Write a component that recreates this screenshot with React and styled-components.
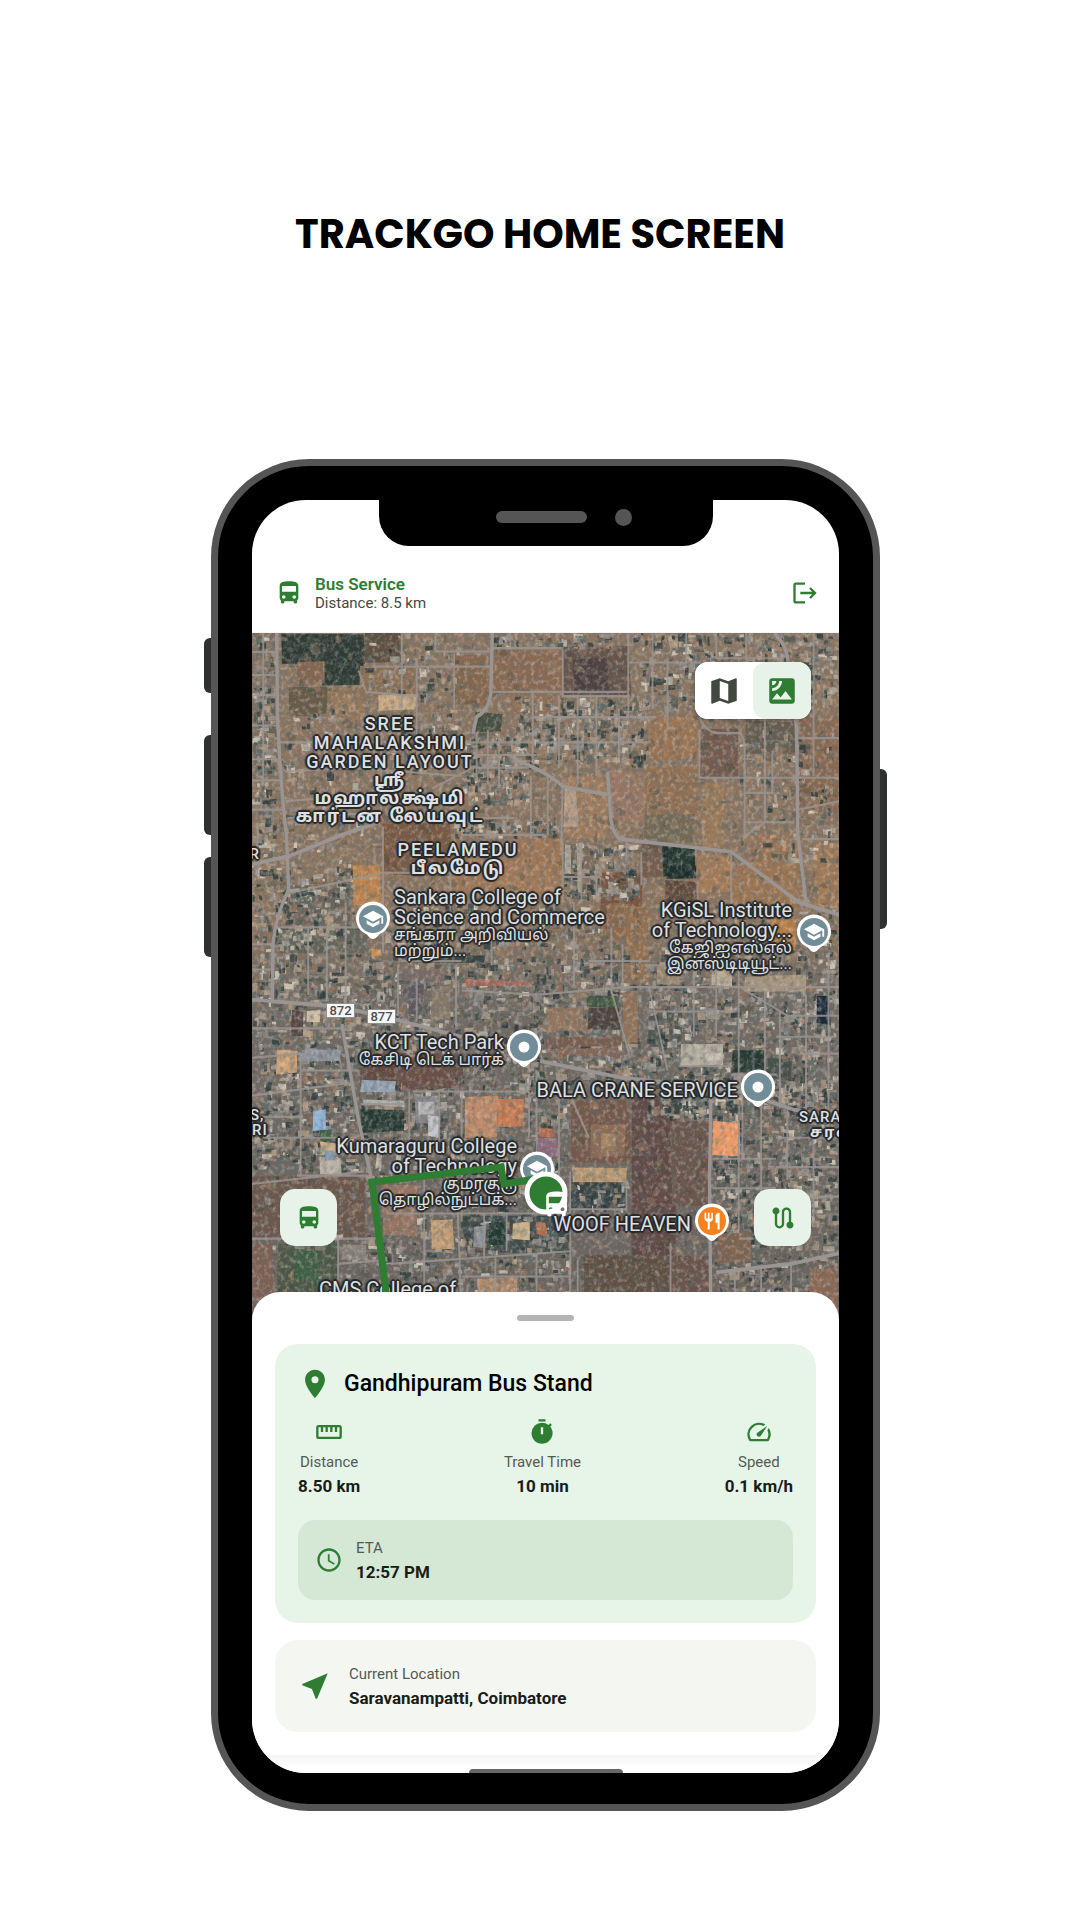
import React from "react";
import styled, { createGlobalStyle, css } from "styled-components";
import {
  MdDirectionsBus,
  MdLogout,
  MdMap,
  MdSatellite,
  MdLocationOn,
  MdStraighten,
  MdTimer,
  MdSpeed,
  MdAccessTime,
  MdNearMe,
  MdRoute,
} from "react-icons/md";

const GlobalStyle = createGlobalStyle`
  *, *::before, *::after { box-sizing: border-box; }
  body {
    margin: 0;
    background: #ffffff;
    font-family: Roboto, "Noto Sans", "Noto Sans Tamil", sans-serif;
  }
  button { font: inherit; border: 0; padding: 0; margin: 0; cursor: pointer; }
  svg { display: block; flex: none; }
`;

const green = "#2e7d32";

/* ---------- page and device ---------- */

const Page = styled.main`
  min-height: 100vh;
  display: flex;
  flex-direction: column;
  align-items: center;
  padding: 210px 0 109px;
`;

const Title = styled.h1`
  margin: 0 0 201px;
  font-family: Poppins, Inter, sans-serif;
  font-size: 40px;
  line-height: 48px;
  font-weight: 700;
  color: #000;
  text-align: center;
`;

const Device = styled.div`
  display: flex;
  align-items: flex-start;
  width: 100%;
  max-width: 694px;
  padding-left: 11px;
`;

const Keys = styled.div`
  display: flex;
  flex-direction: column;
  width: 7px;
  padding-top: ${(p) => p.$top}px;
`;

const Key = styled.span`
  height: ${(p) => p.$length}px;
  margin-bottom: ${(p) => p.$gap || 0}px;
  background: #2f3131;
  border-radius: ${(p) => (p.$side === "left" ? "6px 0 0 6px" : "0 6px 6px 0")};
`;

const Body = styled.div`
  flex: 1;
  min-width: 0;
  background: #000;
  border: 7px solid #555;
  border-radius: 98px;
  padding: 34px 34px 31px;
`;

const Screen = styled.div`
  position: relative;
  overflow: hidden;
  display: flex;
  flex-direction: column;
  background: #fff;
  border-radius: 54px;
`;

const Notch = styled.div`
  position: absolute;
  top: 0;
  left: 50%;
  width: 334px;
  height: 46px;
  margin-left: -167px;
  display: flex;
  align-items: center;
  justify-content: flex-end;
  gap: 28px;
  padding: 0 81px 12px 0;
  background: #000;
  border-radius: 0 0 30px 30px;
`;

const Speaker = styled.span`
  width: 91px;
  height: 12px;
  border-radius: 6px;
  background: #555;
`;

const Camera = styled.span`
  width: 17px;
  height: 17px;
  border-radius: 50%;
  background: #555;
`;

/* ---------- header ---------- */

const Header = styled.header`
  display: flex;
  align-items: center;
  gap: 12px;
  padding: 72px 20px 18px 23px;
  height: 133px;
  border-bottom: 1px solid #f4f4f4;
  color: ${green};
`;

const HeaderText = styled.div`
  flex: 1;
`;

const Service = styled.h2`
  margin: 0;
  font-size: 17px;
  line-height: 20px;
  font-weight: 600;
`;

const ServiceMeta = styled.p`
  margin: 0;
  font-size: 15px;
  line-height: 18px;
  color: #424940;
`;

const IconButton = styled.button`
  display: grid;
  place-items: center;
  background: none;
  color: ${green};
`;

/* ---------- map ---------- */

const MapArea = styled.section`
  position: relative;
  height: 694px;
  overflow: hidden;
  background: #85705e;
`;

const TerrainSvg = styled.svg`
  width: 100%;
  height: 100%;
`;

const Overlay = styled.svg`
  position: absolute;
  left: 0;
  top: 0;
  width: 587px;
  height: 694px;
`;

const outline = css`
  text-shadow: -1px -1px 1px #26282b, 1px -1px 1px #26282b, -1px 1px 1px #26282b,
    1px 1px 1px #26282b, 0 2px 1px #26282b, 0 -2px 1px #26282b,
    2px 0 1px #26282b, -2px 0 1px #26282b, 0 0 3px #26282b;
`;

const MapLabel = styled.div`
  position: absolute;
  top: ${(p) => p.$y}px;
  left: ${(p) => p.$x}px;
  display: flex;
  flex-direction: column;
  align-items: ${(p) =>
    ({ start: "flex-start", middle: "center", end: "flex-end" })[p.$anchor]};
  transform: translateX(
    ${(p) => ({ start: "0", middle: "-50%", end: "-100%" })[p.$anchor]}
  );
  white-space: nowrap;
  color: #dfe0e1;
  ${outline}
`;

const PlaceName = styled.span`
  font-size: 20px;
  line-height: 20px;
`;

const PlaceNative = styled.span`
  font-size: 16px;
  line-height: 16px;
`;

const AreaName = styled.span`
  font-size: ${(p) => (p.$small ? 15 : 18)}px;
  line-height: ${(p) => (p.$small ? 15 : 19)}px;
  font-weight: 500;
  letter-spacing: ${(p) => (p.$small ? 1 : 2)}px;
`;

const AreaNative = styled.span`
  font-size: ${(p) => (p.$small ? 15 : 18)}px;
  line-height: ${(p) => (p.$small ? 15 : 18)}px;
  font-weight: 700;
  letter-spacing: 2px;
`;

const RoadShield = styled.span`
  position: absolute;
  top: ${(p) => p.$y}px;
  left: ${(p) => p.$x}px;
  width: 29px;
  height: 15px;
  background: #f6f6f6;
  border: 1px solid #8b8f93;
  color: #4a4d51;
  font-size: 13px;
  line-height: 13px;
  font-weight: 500;
  text-align: center;
`;

const MapToggle = styled.div`
  position: absolute;
  top: 29px;
  right: 28px;
  display: flex;
  background: #fff;
  border-radius: 13px;
  box-shadow: 0 1px 5px rgba(0, 0, 0, 0.35);
`;

const ToggleButton = styled.button`
  display: grid;
  place-items: center;
  width: 58px;
  height: 57px;
  border-radius: 13px;
  background: ${(p) => (p.$active ? "#e7f3e8" : "#ffffff")};
  color: ${(p) => (p.$active ? green : "#424940")};
`;

const MapButton = styled.button`
  position: absolute;
  top: 556px;
  ${(p) => p.$side}: 28px;
  display: grid;
  place-items: center;
  width: 57px;
  height: 57px;
  border-radius: 15px;
  background: #e7f3e8;
  color: ${green};
`;

/* ---------- bottom sheet ---------- */

const Sheet = styled.section`
  position: relative;
  display: flex;
  flex-direction: column;
  margin-top: -35px;
  padding: 23px 23px;
  background: #fff;
  border-radius: 28px 28px 0 0;
`;

const Handle = styled.span`
  align-self: center;
  width: 57px;
  height: 6px;
  border-radius: 3px;
  background: #b3b5b2;
  margin-bottom: 23px;
`;

const Card = styled.article`
  display: flex;
  flex-direction: ${(p) => (p.$row ? "row" : "column")};
  align-items: ${(p) => (p.$row ? "center" : "stretch")};
  gap: ${(p) => (p.$row ? 17 : 0)}px;
  padding: ${(p) => (p.$row ? "22px 23px" : "22px 23px 23px")};
  margin-bottom: ${(p) => (p.$row ? 0 : 17)}px;
  border-radius: 23px;
  background: ${(p) => (p.$row ? "#f4f6f1" : "#e7f4e8")};
  color: ${green};
`;

const StopRow = styled.div`
  display: flex;
  align-items: center;
  gap: 12px;
  margin-bottom: 17px;
`;

const StopName = styled.h3`
  margin: 0;
  font-size: 23px;
  line-height: 35px;
  font-weight: 500;
  color: #000;
`;

const Stats = styled.div`
  display: flex;
  justify-content: space-between;
  margin-bottom: 22px;
`;

const Stat = styled.div`
  display: flex;
  flex-direction: column;
  align-items: center;
  gap: 4px;
`;

const Field = styled.dl`
  margin: 0;
  text-align: ${(p) => (p.$centered ? "center" : "left")};
`;

const FieldLabel = styled.dt`
  font-size: 15px;
  line-height: 24px;
  color: #535b51;
`;

const FieldValue = styled.dd`
  margin: 0;
  font-size: 17px;
  line-height: 24px;
  font-weight: 700;
  color: #191d18;
`;

const EtaBox = styled.div`
  display: flex;
  align-items: center;
  gap: 13px;
  padding: 16px 17px;
  border-radius: 17px;
  background: #d5e8d5;
`;

const NavStrip = styled.div`
  display: flex;
  justify-content: center;
  align-items: flex-end;
  height: 18px;
  background: linear-gradient(#f5f5f5, #fefefe 70%);
`;

const NavBar = styled.span`
  width: 154px;
  height: 4px;
  border-radius: 4px 4px 0 0;
  background: #636664;
`;

/* ---------- satellite ground ---------- */

function makeRandom(seed) {
  let s = seed;
  return () => {
    s = (s * 1664525 + 1013904223) % 4294967296;
    return s / 4294967296;
  };
}

const FIELDS = [
  [80, 0, 220, 75, "#2e3a36"], [190, 60, 110, 62, "#2f3b35"], [120, 70, 70, 50, "#86664f"],
  [0, 0, 66, 350, "#7f6f5e"], [100, 130, 100, 70, "#675a45"], [200, 130, 100, 80, "#94765a"],
  [300, 0, 100, 70, "#5d5040"], [290, 80, 150, 70, "#8d6f57"],
  [540, 50, 90, 120, "#86684f"], [645, 40, 200, 110, "#8b6a53"],
  [830, 30, 180, 120, "#66524a"], [860, 60, 90, 80, "#4f4040"], [690, 140, 140, 50, "#8f7056"],
  [1060, 200, 130, 100, "#9c7454"], [1200, 230, 100, 110, "#745a4e"], [1320, 210, 130, 80, "#665d50"],
  [1460, 200, 108, 230, "#8a6a52"], [830, 340, 120, 150, "#a07c5e"], [835, 370, 34, 90, "#b59a83"],
  [960, 330, 90, 120, "#987763"], [1050, 320, 140, 120, "#917052"], [1050, 430, 130, 70, "#746a55"],
  [1200, 360, 60, 150, "#9a7a58"], [1330, 480, 130, 130, "#9b7353"], [350, 455, 180, 120, "#7a5943"],
  [530, 540, 300, 80, "#a27958"], [700, 490, 130, 70, "#9f7654"],
  [830, 500, 90, 60, "#7b6a59"], [930, 570, 110, 130, "#7a543f"], [1040, 500, 60, 80, "#765b4c"],
  [1102, 590, 90, 60, "#5f4637"], [1190, 530, 90, 90, "#a67c59"],
  [1280, 560, 180, 100, "#9c7453"], [1500, 500, 68, 150, "#a07855"], [1000, 650, 62, 180, "#95704f"],
  [950, 640, 50, 90, "#8b694d"], [100, 600, 160, 90, "#6a6458"],
  [70, 700, 240, 60, "#66655a"], [1060, 900, 90, 80, "#505750"],
  [290, 1000, 270, 80, "#665047"], [850, 1110, 160, 150, "#745849"],
  [1010, 1100, 120, 470, "#604a45"], [1120, 1160, 100, 200, "#6b544c"],
  [0, 1290, 300, 150, "#6b574c"], [890, 1480, 230, 170, "#5f4f43"], [1120, 1480, 100, 170, "#6b534b"],
  [560, 1385, 290, 90, "#414b49"], [70, 1450, 160, 120, "#4b5644"], [850, 1306, 150, 62, "#364245"],
];

const LANDMARKS = [
  [340, 150, 98, 32, "#c9a983"], [600, 190, 66, 44, "#465041"], [272, 552, 72, 92, "#bd8350"],
  [1098, 505, 85, 75, "#24342f"], [1110, 550, 76, 32, "#1f2e2a"], [1382, 682, 70, 76, "#bd8047"],
  [420, 764, 200, 20, "#36433e"], [395, 802, 116, 22, "#7a6a66"], [570, 826, 180, 14, "#a8695c"],
  [416, 840, 40, 66, "#5d575e"], [480, 842, 50, 80, "#857868"], [785, 892, 100, 52, "#93765f"],
  [898, 892, 84, 52, "#4c433e"], [892, 866, 86, 24, "#41543d"], [784, 962, 200, 22, "#7a5c4e"],
  [790, 990, 190, 14, "#84685a"], [990, 852, 40, 120, "#937259"], [1148, 980, 108, 48, "#b3ad9e"],
  [1282, 996, 92, 46, "#263833"], [1506, 866, 36, 64, "#1f2c38"], [300, 1016, 86, 52, "#64493f"],
  [400, 1020, 130, 66, "#6b4d45"], [66, 992, 58, 56, "#d0a377"], [134, 990, 104, 30, "#8e949c"],
  [292, 1064, 90, 26, "#93a3b5"], [292, 1134, 114, 54, "#263831"], [296, 1112, 110, 12, "#aeb2ad"],
  [566, 1104, 92, 92, "#bf8a68"], [658, 1106, 68, 66, "#c97c51"], [436, 1102, 62, 62, "#87868a"],
  [446, 1112, 40, 34, "#b4b4b4"], [470, 1148, 32, 50, "#c3c6c8"], [165, 1135, 30, 46, "#8fb5de"],
  [182, 1180, 30, 28, "#3f5f45"], [184, 1212, 52, 30, "#c9ad86"], [182, 1246, 56, 40, "#b7b1a3"],
  [196, 1232, 24, 24, "#8298ad"], [904, 1172, 92, 72, "#8d6c56"], [930, 1190, 44, 44, "#a58261"],
  [1232, 1162, 70, 80, "#ee9a66"], [856, 1274, 146, 28, "#b8986f"], [350, 1312, 92, 120, "#957361"],
  [480, 1394, 58, 72, "#c49d74"], [697, 1402, 48, 38, "#cbb28a"], [759, 1402, 28, 30, "#b5714e"],
  [632, 1400, 48, 58, "#203730"], [762, 1202, 56, 40, "#8d6a7c"], [766, 1180, 46, 20, "#b86c50"],
  [110, 1470, 70, 70, "#3c5d43"], [2, 1450, 56, 200, "#7d6153"], [604, 1532, 104, 60, "#b48b69"],
  [1244, 1426, 90, 70, "#80634f"], [1490, 1510, 78, 140, "#8b6753"], [1080, 790, 60, 44, "#9b8871"],
  [1226, 800, 54, 40, "#b9aa94"], [1316, 816, 164, 36, "#a9967f"], [836, 500, 14, 74, "#a9a495"],
  [868, 500, 14, 120, "#aaa08b"], [590, 1408, 36, 50, "#8c9195"], [240, 1456, 66, 34, "#8d857d"],
  [146, 896, 34, 26, "#cfbfa4"], [108, 900, 28, 60, "#574440"],
  [1200, 1000, 50, 20, "#c5c0b2"], [320, 750, 26, 22, "#c78d51"], [1380, 1010, 60, 50, "#46504a"],
];

const DISTRICTS = [
  [0, 0, 66, 540, 190], [80, 170, 220, 360, 110], [300, 0, 260, 170, 60], [640, 0, 430, 40, 60],
  [1030, 0, 538, 190, 420], [560, 235, 190, 180, 200], [700, 150, 360, 170, 340],
  [540, 440, 290, 50, 110], [830, 500, 210, 140, 170], [1300, 230, 260, 320, 150],
  [0, 540, 280, 220, 260], [0, 760, 560, 250, 560], [560, 760, 480, 240, 400],
  [360, 180, 200, 160, 90], [560, 1000, 540, 100, 240], [1050, 740, 518, 420, 900],
  [0, 1000, 290, 290, 420], [290, 1050, 280, 260, 280], [560, 1100, 290, 290, 240],
  [1090, 1100, 130, 60, 60], [1230, 1050, 338, 420, 560], [300, 1380, 560, 270, 420],
  [1230, 1480, 338, 170, 200], [0, 1290, 340, 360, 50], [350, 640, 600, 120, 170],
  [1190, 640, 378, 120, 90], [860, 1300, 150, 80, 40],
];

const ROOFS = ["#b3aba0", "#d6cdbd", "#87807a", "#565850", "#35423e", "#92725e", "#5d6a66", "#b09a82", "#97918c", "#2c3a3b"];

const ROADS_MAIN = [
  "M66 0 L68 200 Q78 380 92 480 L98 610 Q60 680 56 740 L54 880",
  "M642 0 L638 140 Q636 180 600 200 L590 240",
  "M950 330 L958 440 Q966 482 985 490 L1280 520 L1460 640 L1568 670",
  "M1395 0 Q1430 30 1432 70 L1455 230 L1458 480 L1480 640",
  "M0 872 L230 888 L380 918 L560 960",
  "M240 930 L285 1160 L320 1300 L345 1460 L365 1640",
  "M770 1018 L980 1056 L1300 1090 L1450 1134 L1568 1150",
  "M1226 1090 L1222 1300 L1226 1640",
  "M0 550 L100 530 L240 480 L340 450",
  "M700 300 Q790 330 830 365 L950 384",
  "M1240 1520 L1440 1500 L1568 1475",
];

const ROADS_MINOR = [
  "M0 45 H66 M0 100 H66 M0 148 H66 M0 220 H66 M0 300 H70 M0 350 H80 M0 420 H88 M30 0 V350 M15 460 V520",
  "M400 0 V180 M490 0 V44 H640 M540 50 V180 M320 80 H640 M285 90 L305 140 L440 150 M440 60 V300",
  "M345 200 V440 M75 260 H350 M90 330 L260 320 L560 340 M90 400 L350 380 M95 440 L280 430",
  "M600 240 V350 M630 230 V360 M660 240 V370 M560 260 H750 M560 290 H760 M570 320 H740 M480 370 L590 320",
  "M690 0 L690 30 M640 36 H830 M750 150 V310 M640 140 H1000 M830 40 V150 H1010 M820 150 V320",
  "M750 200 H1080 M760 260 H1060 M870 150 V360 M920 150 V340 M980 180 V300 M1005 0 V200 M1005 70 H1200",
  "M1070 0 V180 M1110 60 V230 M1160 0 V70 M1190 180 Q1200 230 1240 238 H1300 Q1315 240 1316 280 V480",
  "M1195 230 V344 H1568 M1240 0 V60 H1420 M1320 0 V70 M1500 0 V340 M1300 60 V210 M1370 200 V450 L1320 480",
  "M1316 380 H1390 V280 M1460 250 H1568 M1460 420 L1568 400 M1470 490 H1568 M1316 450 H1440",
  "M745 340 V480 M790 340 V480 M830 350 L826 500 M540 440 H700 M560 480 H780 M830 500 V640 M880 500 V640 M920 560 V640 M830 580 H930",
  "M1000 490 V540 M1040 520 V600 M1280 520 V650 M1190 600 V690 M350 460 V760 M90 620 L350 570 H530 V760",
  "M60 700 H350 M150 700 V860 M200 700 V870 M250 640 V900 M350 700 L400 780 H560 M0 740 H60 M0 800 H54",
  "M545 790 V940 M560 850 L760 860 L1000 842 H1568 M390 790 V910 M440 820 V920 M640 700 V790 M400 640 L360 600",
  "M860 640 V840 M960 700 V850 L1010 1010 M900 780 H1060 M990 740 V850 M1060 840 L1110 1040 M1300 760 V1080",
  "M1050 790 H1300 M1060 900 H1280 M1180 780 V960 M1240 780 V960 M1370 850 V1080 M1410 900 V1130 M1480 860 V1140 M1540 760 V1200",
  "M1300 840 L1430 910 H1568 M1140 1030 H1270 M1280 1050 H1400 M1400 960 H1560 M1470 1000 H1568",
  "M0 940 H240 M0 1010 L130 1000 V1290 M0 1100 L260 1070 M0 1150 H130 M30 1200 H280 M130 1040 L280 1040",
  "M120 1290 H320 M0 1310 L300 1280 M430 1090 H740 M420 1090 V1240 M500 1090 V1230 M560 1100 V1400 M290 1120 H410",
  "M760 1040 V1290 M820 1040 V1380 M850 1100 L900 1200 M740 1090 V1200 M850 1280 V1640 M1000 1300 V1370 H850",
  "M360 1380 H850 M460 1300 V1640 M550 1380 L560 1640 M680 1380 V1470 M370 1500 L850 1470 M560 1530 H850 M620 1380 V1490",
  "M230 1430 V1640 M0 1440 H340 M230 1500 L360 1490 M870 1490 V1640 M1118 1450 V1640 M1300 1160 V1420 M1360 1110 V1450",
  "M1230 1250 H1400 M1310 1100 V1240 M1430 1130 V1300 M1400 1200 H1568 M1400 1270 H1568 M1400 1340 H1568 M1500 1180 V1400",
  "M1230 1320 H1400 M1290 1510 V1640 M1360 1510 V1640 M1440 1500 V1640 M1300 1440 H1340 M650 1480 V1640 M760 1480 V1640",
];

function buildRoofs() {
  const random = makeRandom(20);
  const paths = ROOFS.map(() => "");
  DISTRICTS.forEach(([x, y, w, h, count]) => {
    for (let i = 0; i < count; i += 1) {
      const bw = Math.round(6 + random() * random() * 26);
      const bh = Math.round(6 + random() * random() * 20);
      const bx = Math.round(x + random() * (w - bw));
      const by = Math.round(y + random() * (h - bh));
      const lean = Math.round(random() * 4 - 2);
      paths[Math.floor(random() * ROOFS.length)] += `M${bx} ${by}l${bw} ${lean}l${lean} ${bh}l-${bw} ${-lean}z`;
    }
  });
  return paths;
}

function buildScrub() {
  const random = makeRandom(77);
  let dark = "";
  let light = "";
  for (let i = 0; i < 1300; i += 1) {
    const x = Math.round(random() * 1568);
    const y = Math.round(random() * 1650);
    const w = Math.round(4 + random() * 26);
    const h = Math.round(3 + random() * 14);
    const piece = `M${x} ${y}q${w / 2} -${h} ${w} 0t-4 ${h}t-${w - 4} -${h}z`;
    if (random() < 0.6) dark += piece;
    else light += piece;
  }
  return { dark, light };
}

function buildPlots(plots, seed) {
  const random = makeRandom(seed);
  const jitter = () => Math.round(random() * 8 - 4);
  return plots.map(([x, y, w, h, fill]) => ({
    fill,
    points: [
      [x + jitter(), y + jitter()],
      [x + w + jitter(), y + jitter()],
      [x + w + jitter(), y + h + jitter()],
      [x + jitter(), y + h + jitter()],
    ].join(" "),
  }));
}

const roofPaths = buildRoofs();
const scrub = buildScrub();
const fields = buildPlots(FIELDS, 5);
const landmarks = buildPlots(LANDMARKS, 9);

function Terrain() {
  return (
    <TerrainSvg viewBox="0 0 1568 1650" preserveAspectRatio="none" aria-hidden="true">
      <defs>
        <linearGradient id="ground" x1="0" y1="0" x2="0" y2="1">
          <stop offset="0" stopColor="#8b7663" />
          <stop offset="0.42" stopColor="#8c745f" />
          <stop offset="0.52" stopColor="#736b63" />
          <stop offset="1" stopColor="#6b635e" />
        </linearGradient>
        <filter id="soften" x="0" y="0" width="100%" height="100%">
          <feGaussianBlur stdDeviation="1.4" />
        </filter>
        <filter id="shade" x="0" y="0" width="100%" height="100%">
          <feTurbulence type="fractalNoise" baseFrequency="0.06" numOctaves="4" seed="4" />
          <feColorMatrix values="0 0 0 0 0.12  0 0 0 0 0.14  0 0 0 0 0.14  2 0 0 0 -0.85" />
        </filter>
        <filter id="dust" x="0" y="0" width="100%" height="100%">
          <feTurbulence type="fractalNoise" baseFrequency="0.09" numOctaves="3" seed="19" />
          <feColorMatrix values="0 0 0 0 0.8  0 0 0 0 0.74  0 0 0 0 0.67  0 1.6 0 0 -0.75" />
        </filter>
      </defs>
      <rect width="1568" height="1650" fill="url(#ground)" />
      <g filter="url(#soften)">
        {fields.map(({ points, fill }, i) => (
          <polygon key={i} points={points} fill={fill} />
        ))}
        <path d={scrub.dark} fill="#3c4438" opacity="0.3" />
        <path d={scrub.light} fill="#b08c6b" opacity="0.35" />
        {roofPaths.map((d, i) => (
          <path key={i} d={d} fill={ROOFS[i]} opacity="0.85" />
        ))}
        {landmarks.map(({ points, fill }, i) => (
          <polygon key={i} points={points} fill={fill} />
        ))}
      </g>
      <rect width="1568" height="1650" filter="url(#shade)" opacity="0.7" />
      <rect width="1568" height="1650" filter="url(#dust)" opacity="0.6" />
      <g fill="none" stroke="#9a9592">
        <g strokeWidth="5" opacity="0.85">
          {ROADS_MINOR.map((d, i) => (
            <path key={i} d={d} />
          ))}
        </g>
        <g strokeWidth="9">
          {ROADS_MAIN.map((d, i) => (
            <path key={i} d={d} />
          ))}
        </g>
      </g>
    </TerrainSvg>
  );
}

/* ---------- pins ---------- */

const PIN_GLYPHS = {
  school: (
    <g transform="translate(-11 -11) scale(0.92)" fill="#fff">
      <path d="M5 13.18v4L12 21l7-3.82v-4L12 17l-7-3.82zM12 3L1 9l11 6 9-4.91V17h2V9L12 3z" />
    </g>
  ),
  dot: <circle r="5.5" fill="#fff" />,
  food: (
    <g transform="translate(-10 -10) scale(0.84)" fill="#fff">
      <path d="M11 9H9V2H7v7H5V2H3v7c0 2.12 1.66 3.84 3.75 3.97V22h2.5v-9.03C11.34 12.84 13 11.12 13 9V2h-2v7zm5-3v8h2.5v8H21V2c-2.76 0-5 2.24-5 4z" />
    </g>
  ),
};

function Pin({ x, y, kind }) {
  return (
    <g transform={`translate(${x} ${y})`}>
      <path
        d="M0 20 C-3 20 -4 17 -7 15 A17 17 0 1 1 7 15 C4 17 3 20 0 20Z"
        fill="#fff"
      />
      <circle r="14" fill={kind === "food" ? "#f5821f" : "#738d98"} />
      {PIN_GLYPHS[kind]}
    </g>
  );
}

const LABELS = [
  { x: 138, y: 81, anchor: "middle", area: ["SREE", "MAHALAKSHMI", "GARDEN LAYOUT"], native: ["ஸ்ரீ", "மஹாலக்ஷ்மி", "கார்டன் லேயவுட்"] },
  { x: 206, y: 207, anchor: "middle", area: ["PEELAMEDU"], native: ["பீலமேடு"] },
  { x: 142, y: 254, anchor: "start", place: ["Sankara College of", "Science and Commerce"], native: ["சங்கரா அறிவியல்", "மற்றும்..."] },
  { x: 540, y: 267, anchor: "end", place: ["KGiSL Institute", "of Technology..."], native: ["கேஜிஐஎஸ்எல்", "இன்ஸ்டிடியூட்..."] },
  { x: 252, y: 399, anchor: "end", place: ["KCT Tech Park"], native: ["கேசிடி டெக் பார்க்"] },
  { x: 486, y: 447, anchor: "end", place: ["BALA CRANE SERVICE"] },
  { x: 265, y: 503, anchor: "end", place: ["Kumaraguru College", "of Technology"], native: ["குமரகுரு", "தொழில்நுட்பக்..."] },
  { x: 439, y: 581, anchor: "end", place: ["WOOF HEAVEN"] },
  { x: 67, y: 646, anchor: "start", place: ["CMS College of"] },
  { x: 547, y: 477, anchor: "start", small: true, area: ["SARAVANAMPATTI"] },
  { x: 558, y: 492, anchor: "start", small: true, area: [], native: ["சரவணம்பட்டி"] },
  { x: 8, y: 214, anchor: "end", small: true, area: ["R"] },
  { x: -2, y: 475, anchor: "start", small: true, area: ["S,"] },
  { x: 0, y: 490, anchor: "start", small: true, area: ["RI"] },
];

function Labels() {
  return LABELS.map((label) => {
    const Native = label.place ? PlaceNative : AreaNative;
    return (
      <MapLabel key={`${label.x}-${label.y}`} $x={label.x} $y={label.y} $anchor={label.anchor}>
        {(label.area || []).map((t) => (
          <AreaName key={t} $small={label.small}>{t}</AreaName>
        ))}
        {(label.place || []).map((t) => (
          <PlaceName key={t}>{t}</PlaceName>
        ))}
        {(label.native || []).map((t) => (
          <Native key={t} lang="ta" $small={label.small}>{t}</Native>
        ))}
      </MapLabel>
    );
  });
}

function LiveMap() {
  const [view, setView] = React.useState("satellite");
  return (
    <MapArea aria-label="Live bus map">
      <Terrain />
      <RoadShield $x={74} $y={370}>872</RoadShield>
      <RoadShield $x={115} $y={376}>877</RoadShield>
      <Labels />
      <Overlay viewBox="0 0 587 694" aria-hidden="true">
        <Pin x={121} y={286} kind="school" />
        <Pin x={562} y={299} kind="school" />
        <Pin x={272} y={414} kind="dot" />
        <Pin x={506} y={454} kind="dot" />
        <Pin x={285} y={536} kind="school" />
        <Pin x={460} y={588} kind="food" />
        <path
          d="M136 674 L120 549 L249 534 L252 551 L290 545"
          fill="none"
          stroke={green}
          strokeWidth="7"
        />
        <circle cx="294" cy="560" r="19" fill={green} stroke="#fff" strokeWidth="5" />
        <g transform="translate(289 556) scale(1.3)">
          <path
            fill="#fff"
            d="M4 16c0 .88.39 1.67 1 2.22V20c0 .55.45 1 1 1h1c.55 0 1-.45 1-1v-1h8v1c0 .55.45 1 1 1h1c.55 0 1-.45 1-1v-1.780c.61-.55 1-1.340 1-2.220V6c0-3.500-3.580-4-8-4s-8 .5-8 4v10zm3.500 1c-.83 0-1.500-.67-1.500-1.500S6.670 14 7.500 14s1.500.67 1.500 1.500S8.330 17 7.500 17zm9 0c-.83 0-1.500-.67-1.500-1.500s.67-1.500 1.500-1.500 1.500.67 1.500 1.500-.67 1.500-1.500 1.500zm1.500-6H6V6h12v5z"
          />
        </g>
      </Overlay>
      <MapToggle role="group" aria-label="Map type">
        <ToggleButton
          type="button"
          aria-label="Road map"
          aria-pressed={view === "road"}
          $active={view === "road"}
          onClick={() => setView("road")}
        >
          <MdMap size={34} />
        </ToggleButton>
        <ToggleButton
          type="button"
          aria-label="Satellite"
          aria-pressed={view === "satellite"}
          $active={view === "satellite"}
          onClick={() => setView("satellite")}
        >
          <MdSatellite size={34} />
        </ToggleButton>
      </MapToggle>
      <MapButton type="button" $side="left" aria-label="Centre on bus">
        <MdDirectionsBus size={28} />
      </MapButton>
      <MapButton type="button" $side="right" aria-label="Show route">
        <MdRoute size={28} />
      </MapButton>
    </MapArea>
  );
}

const STATS = [
  { icon: MdStraighten, label: "Distance", value: "8.50 km" },
  { icon: MdTimer, label: "Travel Time", value: "10 min" },
  { icon: MdSpeed, label: "Speed", value: "0.1 km/h" },
];

function LabelledValue({ label, value, centered }) {
  return (
    <Field $centered={centered}>
      <FieldLabel>{label}</FieldLabel>
      <FieldValue>{value}</FieldValue>
    </Field>
  );
}

export default function App() {
  return (
    <>
      <GlobalStyle />
      <Page>
        <Title>TRACKGO HOME SCREEN</Title>
        <Device>
          <Keys $top={179}>
            <Key $side="left" $length={55} $gap={42} />
            <Key $side="left" $length={100} $gap={22} />
            <Key $side="left" $length={100} />
          </Keys>
          <Body>
            <Screen>
              <Header>
                <MdDirectionsBus size={28} />
                <HeaderText>
                  <Service>Bus Service</Service>
                  <ServiceMeta>Distance: 8.5 km</ServiceMeta>
                </HeaderText>
                <IconButton type="button" aria-label="Log out">
                  <MdLogout size={28} />
                </IconButton>
              </Header>
              <LiveMap />
              <Sheet>
                <Handle />
                <Card>
                  <StopRow>
                    <MdLocationOn size={34} />
                    <StopName>Gandhipuram Bus Stand</StopName>
                  </StopRow>
                  <Stats>
                    {STATS.map(({ icon: Icon, label, value }) => (
                      <Stat key={label}>
                        <Icon size={28} />
                        <LabelledValue label={label} value={value} centered />
                      </Stat>
                    ))}
                  </Stats>
                  <EtaBox>
                    <MdAccessTime size={28} />
                    <LabelledValue label="ETA" value="12:57 PM" />
                  </EtaBox>
                </Card>
                <Card $row>
                  <MdNearMe size={34} />
                  <LabelledValue label="Current Location" value="Saravanampatti, Coimbatore" />
                </Card>
              </Sheet>
              <NavStrip>
                <NavBar />
              </NavStrip>
              <Notch>
                <Speaker />
                <Camera />
              </Notch>
            </Screen>
          </Body>
          <Keys $top={310}>
            <Key $side="right" $length={160} />
          </Keys>
        </Device>
      </Page>
    </>
  );
}
